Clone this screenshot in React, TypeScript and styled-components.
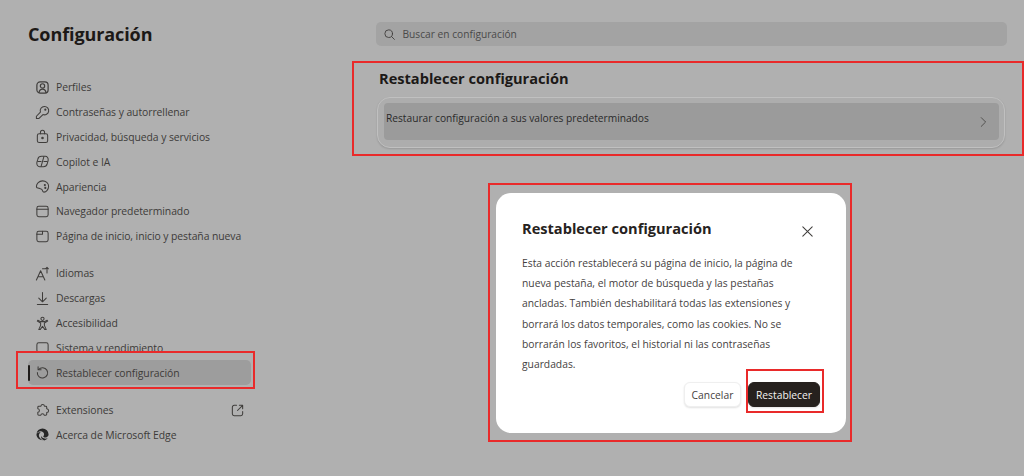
import React from "react";
import styled, { createGlobalStyle } from "styled-components";

const Global = createGlobalStyle`
  html, body { margin: 0; padding: 0; height: 100%; background: #b0b0b0; overflow: hidden; }
  body { font-family: "Open Sans", "Noto Sans", "Liberation Sans", sans-serif; }
  * { box-sizing: border-box; }
`;

const Page = styled.div`
  position: relative;
  width: 1024px;
  height: 476px;
  display: grid;
  grid-template-columns: 352px 1fr;
  background: #b0b0b0;
  color: #1f1f1f;
  overflow: hidden;
`;

const Sidebar = styled.aside`
  display: flex;
  flex-direction: column;
  padding: 21px 0 0 28px;
`;

const AppTitle = styled.h1`
  margin: 0 0 28px;
  font-size: 18px;
  line-height: 26px;
  font-weight: 700;
  letter-spacing: -0.1px;
  color: #1c1917;
`;

const NavGroup = styled.nav`
  display: flex;
  flex-direction: column;
  width: 224px;
  margin-bottom: 12.5px;
`;

const NavRow = styled.div`
  display: flex;
  align-items: center;
  gap: 6px;
  height: 24.8px;
  padding-left: 7px;
  font-size: 10.4px;
  letter-spacing: -0.07px;
  color: #3d3b39;
  white-space: nowrap;
  svg { flex: none; width: 15px; height: 15px; }
`;

const NavEnd = styled.span`
  margin-left: auto;
  margin-right: 7px;
  display: flex;
`;

const ActiveFrame = styled.div`
  position: relative;
  z-index: 1;
  margin: -9px 0 -4px -12px;
  width: 239px;
  height: 38px;
  padding: 7px 2px 0 10px;
  border: 2px solid #e92a2a;
  background: #b0b0b0;
`;

const ActiveRow = styled(NavRow)`
  position: relative;
  width: 223px;
  height: 25px;
  border-radius: 5px;
  background: #9d9d9d;
  &::before {
    content: "";
    position: absolute;
    left: 0;
    top: 5px;
    width: 2px;
    height: 16px;
    border-radius: 1px;
    background: #1f1c1a;
  }
`;

const Main = styled.main`
  display: flex;
  flex-direction: column;
  padding: 22px 17px 0 24px;
`;

const SearchBox = styled.div`
  display: flex;
  align-items: center;
  gap: 6.5px;
  width: 631px;
  height: 24px;
  padding-left: 7px;
  border-radius: 5px;
  background: #a3a3a3;
  font-size: 10.2px;
  color: #4a4a4a;
  svg { width: 13px; height: 13px; }
`;

const Section = styled.section`
  position: relative;
  margin-top: 22px;
  display: flex;
  flex-direction: column;
  padding-left: 1px;
`;

const SectionFrame = styled.div`
  position: absolute;
  left: -24px;
  top: -7px;
  width: 672px;
  height: 95px;
  border: 2px solid #e92a2a;
  pointer-events: none;
`;

const SectionTitle = styled.h2`
  margin: 0 0 9px 2px;
  font-size: 14.6px;
  line-height: 20px;
  font-weight: 700;
  color: #1c1917;
`;

const Card = styled.div`
  width: 628px;
  height: 51px;
  padding: 5px 5px 6px 6px;
  border-radius: 13px;
  border: 1px solid #c0c0c0;
  box-shadow: 0 1px 2px rgba(0, 0, 0, 0.14);
  background: #adadad;
`;

const CardRow = styled.div`
  display: flex;
  align-items: flex-start;
  justify-content: space-between;
  height: 37px;
  padding: 8px 9px 0 2px;
  border-radius: 4px;
  background: #9b9b9b;
  font-size: 10.2px;
  line-height: 15px;
  color: #2a2a2a;
  svg { margin-top: 4px; width: 14px; height: 14px; stroke-width: 0.9; }
`;

const ModalFrame = styled.div`
  position: absolute;
  left: 488px;
  top: 183px;
  width: 364px;
  height: 259px;
  padding: 8px 4px 6px 6px;
  border: 2px solid #e92a2a;
`;

const Modal = styled.div`
  display: flex;
  flex-direction: column;
  height: 240px;
  width: 350px;
  padding: 24px 26px 0;
  border-radius: 15px;
  background: #ffffff;
`;

const ModalHead = styled.div`
  display: flex;
  justify-content: space-between;
  align-items: flex-start;
  margin-bottom: 14px;
`;

const ModalTitle = styled.h3`
  margin: 0;
  font-size: 14.6px;
  line-height: 22px;
  font-weight: 700;
  color: #262220;
`;

const CloseIcon = styled.span`
  display: flex;
  margin: 7px 5px 0 0;
  color: #4a4a4a;
`;

const ModalText = styled.p`
  margin: 0;
  font-size: 10.3px;
  line-height: 20.2px;
  color: #45413e;
`;

const Actions = styled.div`
  position: relative;
  display: flex;
  justify-content: flex-end;
  gap: 7px;
  margin-top: 8px;
`;

const Button = styled.button<{ $primary?: boolean }>`
  height: 25px;
  padding: 0;
  width: ${(p) => (p.$primary ? "72px" : "57px")};
  border-radius: 6px;
  border: 1px solid ${(p) => (p.$primary ? "#26211e" : "#efefef")};
  background: ${(p) => (p.$primary ? "#26211e" : "#ffffff")};
  color: ${(p) => (p.$primary ? "#f4f2f0" : "#45413e")};
  font: 500 10.3px "Open Sans", sans-serif;
  box-shadow: 0 1px 2px rgba(0, 0, 0, 0.12);
`;

const ButtonFrame = styled.div`
  position: absolute;
  right: -4px;
  top: -13px;
  width: 78px;
  height: 44px;
  border: 2px solid #e92a2a;
  pointer-events: none;
`;

type IconProps = { children: React.ReactNode; size?: number };
const Ico = ({ children, size = 15 }: IconProps) => (
  <svg viewBox="0 0 16 16" width={size} height={size} fill="none" stroke="#3f3d3b" strokeWidth="1.1" strokeLinecap="round" strokeLinejoin="round">
    {children}
  </svg>
);

const icons: Record<string, React.ReactNode> = {
  perfil: <><rect x="2" y="2" width="12" height="12" rx="3.5" strokeWidth="1.3" /><circle cx="8" cy="6.3" r="2.3" strokeWidth="1.3" /><path d="M4.2 13.5c.5-2.6 1.900-3.700 3.800-3.700s3.300 1.100 3.800 3.700" strokeWidth="1.3" /></>,
  key: <><path d="M10 1.500a4.500 4.500 0 1 1-1.500 8.700L4 14.500H1.500V12l4.300-4.500A4.500 4.500 0 0 1 10 1.500Z" /><circle cx="11" cy="5" r=".6" /></>,
  lock: <><rect x="2.500" y="5" width="11" height="9.500" rx="2" /><path d="M5.800 5V3.500a2.200 2.200 0 0 1 4.400 0V5" /><circle cx="8" cy="9.700" r=".8" fill="#3f3d3b" /></>,
  copilot: <><path d="M5 13.500C3 13.500 1.500 11.500 2 9L3 5.500C3.500 3.500 5 2.500 7 2.500h4c2 0 3.500 2 3 4.500l-1 3.500c-.5 2-2 3-4 3Z" /><path d="M9.500 2.800 6.500 13.200M3 8h3.500M9.500 8H13" /></>,
  palette: <><path d="M8 2c3.600 0 6.500 2.600 6.500 5.800 0 3.400-2.500 6.200-5 6.200-1.500 0-1.500-1.300-1.800-2.300-.4-1.400-1.500-1.500-3-1.700C2.500 9.800 1.500 9.300 1.500 8c0-3.300 2.900-6 6.500-6Z" /><circle cx="10.500" cy="6.500" r=".6" /><circle cx="11" cy="9.500" r=".6" /></>,
  browser: <><rect x="2" y="2.500" width="12" height="11" rx="2" /><path d="M2 5.500h12" /></>,
  home: <><rect x="2" y="2.500" width="12" height="11" rx="2" /><path d="M2 5.500h6V2.500" /></>,
  lang: <><path d="M1.500 15 6 5l4.500 10M3 11.500h6" /><path d="M8 3h3M12.800 1.500v6M11.300 3l1.500-1.500L14.300 3" /></>,
  download: <path d="M8 1.500v10M4 7.500l4 4 4-4M2.500 14.500h11" />,
  access: <><circle cx="8" cy="3" r="1.700" /><path d="M2.500 5.500 3 4.500l3 1.500h4l3-1.500.5 1-3.500 2v2.500l2 4.500h-1.500L8 11l-2.500 3.500H4l2-4.500V7.500Z" /></>,
  system: <rect x="2" y="3" width="12" height="10" rx="2" />,
  reset: <><path d="M3.800 4.800A5.500 5.500 0 1 1 2.500 8" /><path d="M3.300 1.800v3.200h3.200" /></>,
  puzzle: <path d="M5 3.500h1.300c.1-1.300 1-2 1.900-2s1.800.7 1.900 2h1.400c.6 0 1 .4 1 1v1.700c1.200.1 2 1 2 2s-.8 1.900-2 2V12c0 .6-.4 1-1 1H9.800c-.1-1-.8-1.500-1.800-1.500S6.300 12 6.200 13H4c-.6 0-1-.4-1-1V9.800c1 0 1.700-.8 1.700-1.800S4 6.300 3 6.200V4.500c0-.6.400-1 1-1Z" />,
  external: <><path d="M7 2.500H4.500a2 2 0 0 0-2 2v7a2 2 0 0 0 2 2h7a2 2 0 0 0 2-2V9" /><path d="M10 2.500h3.500V6M13.500 2.500 8 8" /></>,
};

const EdgeLogo = () => (
  <svg viewBox="0 0 16 16" width={15} height={15}>
    <path fill="#262626" d="M8 1.500a6.500 6.500 0 0 1 6.500 6.600c0 2-1.700 3-3.300 3-1.300 0-2.400-.5-2.400-1.300 0-.5.900-.7.900-1.900C9.700 6 8 4.600 6 4.600c-2.200 0-4 1.500-4.400 3A6.500 6.500 0 0 1 8 1.500Z" />
    <path fill="#262626" d="M1.500 8.500c0-1.900 1.700-3 3.300-3 .5 0 1 .1 1.300.3-1.300.6-2 1.700-2 3.100 0 2.200 1.800 4 4 5.100a6.500 6.500 0 0 1-6.600-5.500Z" />
    <path fill="#262626" d="M9.800 14.300c-1.700-.5-3.400-2.300-3.400-3.900 0-.3 0-.5.100-.7.500 1.500 2.400 2.700 4.500 2.700 1 0 2-.3 2.700-.8a6.500 6.500 0 0 1-3.900 2.700Z" />
  </svg>
);

const group1: [string, string][] = [
  ["perfil", "Perfiles"],
  ["key", "Contraseñas y autorrellenar"],
  ["lock", "Privacidad, búsqueda y servicios"],
  ["copilot", "Copilot e IA"],
  ["palette", "Apariencia"],
  ["browser", "Navegador predeterminado"],
  ["home", "Página de inicio, inicio y pestaña nueva"],
];

const group2: [string, string][] = [
  ["lang", "Idiomas"],
  ["download", "Descargas"],
  ["access", "Accesibilidad"],
  ["system", "Sistema y rendimiento"],
];

export default function App() {
  return (
    <Page>
      <Global />
      <Sidebar>
        <AppTitle>Configuración</AppTitle>
        <NavGroup>
          {group1.map(([i, t]) => (
            <NavRow key={t}><Ico>{icons[i]}</Ico>{t}</NavRow>
          ))}
        </NavGroup>
        <NavGroup>
          {group2.map(([i, t]) => (
            <NavRow key={t}><Ico>{icons[i]}</Ico>{t}</NavRow>
          ))}
          <ActiveFrame>
            <ActiveRow><Ico>{icons.reset}</Ico>Restablecer configuración</ActiveRow>
          </ActiveFrame>
        </NavGroup>
        <NavGroup>
          <NavRow><Ico>{icons.puzzle}</Ico>Extensiones<NavEnd><Ico>{icons.external}</Ico></NavEnd></NavRow>
          <NavRow><EdgeLogo />Acerca de Microsoft Edge</NavRow>
        </NavGroup>
      </Sidebar>
      <Main>
        <SearchBox>
          <Ico><circle cx="7" cy="7" r="4.700" /><path d="M10.500 10.500 14 14" /></Ico>
          Buscar en configuración
        </SearchBox>
        <Section>
          <SectionFrame />
          <SectionTitle>Restablecer configuración</SectionTitle>
          <Card>
            <CardRow>
              Restaurar configuración a sus valores predeterminados
              <Ico><path d="M6 3l5 5-5 5" /></Ico>
            </CardRow>
          </Card>
        </Section>
      </Main>
      <ModalFrame>
        <Modal>
          <ModalHead>
            <ModalTitle>Restablecer configuración</ModalTitle>
            <CloseIcon><Ico size={15}><path d="M3 3l10 10M13 3 3 13" /></Ico></CloseIcon>
          </ModalHead>
          <ModalText>
            Esta acción restablecerá su página de inicio, la página de nueva pestaña, el motor de búsqueda y las pestañas ancladas. También deshabilitará todas las extensiones y borrará los datos temporales, como las cookies. No se borrarán los favoritos, el historial ni las contraseñas guardadas.
          </ModalText>
          <Actions>
            <Button>Cancelar</Button>
            <Button $primary>Restablecer</Button>
            <ButtonFrame />
          </Actions>
        </Modal>
      </ModalFrame>
    </Page>
  );
}
